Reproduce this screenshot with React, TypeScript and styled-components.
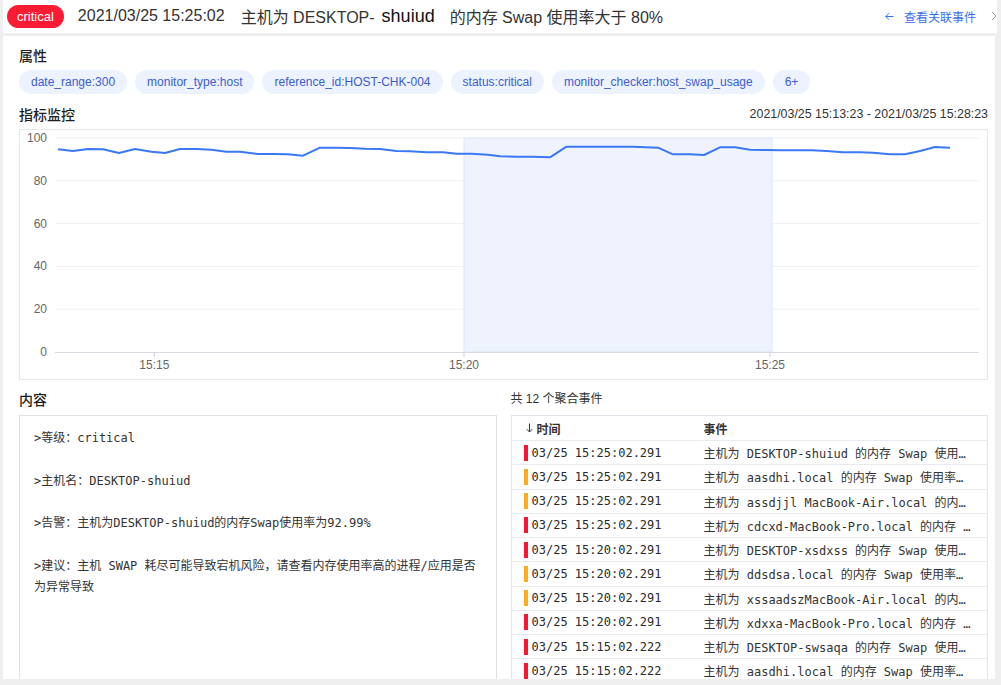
import React from "react";
import styled, { createGlobalStyle } from "styled-components";

const GlobalStyle = createGlobalStyle`
  html, body {
    margin: 0;
    padding: 0;
    background: #efefef;
    overflow: hidden;
  }
  body {
    font-family: "Liberation Sans", "Noto Sans CJK SC", sans-serif;
    color: #333;
  }
  * { box-sizing: border-box; }
`;

const Page = styled.div`
  width: 1001px;
  height: 685px;
  padding: 0 0 6px 3px;
  display: flex;
  flex-direction: column;
  gap: 3px;
  overflow: hidden;
`;

const Header = styled.header`
  height: 33px;
  margin-right: 4px;
  background: #fff;
  display: flex;
  align-items: center;
  padding: 0 0 1px 4px;
  overflow: hidden;
  flex-shrink: 0;
`;

const Badge = styled.span`
  height: 23px;
  line-height: 23px;
  padding: 0 10px;
  border-radius: 12px;
  background: #fb1b33;
  color: #fff;
  font-size: 13px;
  font-family: "Liberation Sans", sans-serif;
`;

const Title = styled.div`
  margin-left: 14px;
  display: flex;
  align-items: center;
  font-size: 16px;
  color: #333;
  white-space: nowrap;
  font-family: "Liberation Sans", "Noto Sans CJK SC", sans-serif;
`;

const Stamp = styled.span`
  margin-right: 16px;
`;

const Host = styled.span`
  font-size: 18px;
  color: #111;
  margin: 0 15px 0 7px;
`;

const LinkBtn = styled.a`
  margin-left: auto;
  display: flex;
  align-items: center;
  gap: 10px;
  color: #3a6cf0;
  font-size: 12px;
  font-family: "Noto Sans CJK SC", sans-serif;
  cursor: pointer;
`;

const Chevron = styled.svg`
  margin-left: 15px;
  flex-shrink: 0;
`;

const Body = styled.main`
  flex: 1;
  margin-right: 6px;
  background: #fff;
  padding: 9px 7px 0 16px;
  overflow: hidden;
  display: flex;
  flex-direction: column;
`;

const SectionTitle = styled.h3`
  margin: 0;
  font-size: 14px;
  line-height: 20px;
  font-weight: 500;
  color: #1f1f1f;
  font-family: "Noto Sans CJK SC", sans-serif;
`;

const Tags = styled.div`
  margin-top: 5px;
  display: flex;
  flex-wrap: wrap;
  gap: 8px;
`;

const Tag = styled.span`
  height: 24px;
  line-height: 24px;
  padding: 0 12px;
  border-radius: 12px;
  background: #edf3fe;
  color: #3b5bd3;
  font-size: 12px;
  font-family: "Liberation Sans", sans-serif;
`;

const SectionHead = styled.div`
  margin-top: 10px;
  display: flex;
  align-items: center;
  justify-content: space-between;
`;

const Range = styled.span`
  font-size: 12.4px;
  color: #333;
  font-family: "Liberation Sans", sans-serif;
`;

const ChartBox = styled.div`
  margin-top: 5px;
  height: 251px;
  border: 1px solid #e4e7ed;
  flex-shrink: 0;
`;

const Lower = styled.div`
  margin-top: 9px;
  display: grid;
  grid-template-columns: 1fr 1fr;
  gap: 14px;
`;

const Col = styled.section`
  display: flex;
  flex-direction: column;
  min-width: 0;
`;

const Count = styled.div`
  font-size: 12px;
  line-height: 20px;
  color: #333;
  font-family: "Liberation Sans", "Noto Sans CJK SC", sans-serif;
`;

const ContentBox = styled.div`
  margin-top: 6px;
  height: 320px;
  border: 1px solid #dfe1e6;
  padding: 12px 14px;
  font-size: 12px;
  line-height: 21.33px;
  color: #333;
  white-space: pre-wrap;
  font-family: "DejaVu Sans Mono", "Noto Sans CJK SC", monospace;
`;

const Table = styled.div`
  margin-top: 6px;
  border: 1px solid #e1e4ea;
  border-bottom: none;
`;

const HeadRow = styled.div`
  height: 25px;
  display: flex;
  align-items: center;
  border-bottom: 1px solid #e8eaef;
  font-size: 12px;
  font-weight: 600;
  color: #333;
  font-family: "Noto Sans CJK SC", sans-serif;
`;

const Row = styled.div`
  height: 24.25px;
  display: flex;
  align-items: center;
  border-bottom: 1px solid #e8eaef;
  font-size: 12px;
  color: #333;
  font-family: "DejaVu Sans Mono", "Noto Sans CJK SC", monospace;
`;

const TimeCell = styled.div`
  width: 192px;
  flex-shrink: 0;
  padding-left: 12px;
  display: flex;
  align-items: center;
  white-space: nowrap;
  color: #2a2a2a;
`;

const HeadTime = styled(TimeCell)`
  padding-left: 14px;
  gap: 4px;
  color: #333;
`;

const EventCell = styled.div`
  flex: 1;
  min-width: 0;
  padding-right: 15px;
  white-space: pre;
  overflow: hidden;
  text-overflow: ellipsis;
`;

const Bar = styled.span<{ $level: "critical" | "warning" }>`
  width: 4px;
  height: 16px;
  margin-right: 4px;
  background: ${(p) => (p.$level === "critical" ? "#fb1530" : "#ffab1c")};
`;

const tags = [
  "date_range:300",
  "monitor_type:host",
  "reference_id:HOST-CHK-004",
  "status:critical",
  "monitor_checker:host_swap_usage",
  "6+",
];

const points: [number, number][] = [
  [58, 149.3], [73, 151], [88, 149], [103, 149.3], [119, 153], [135, 149],
  [151.5, 151.7], [165, 153], [180, 149], [196.5, 149], [211.5, 149.7],
  [226.5, 151.7], [240, 151.7], [258, 154], [273, 154], [288, 154.3],
  [303, 155.7], [320, 147.7], [335, 147.7], [350, 148], [365, 148.7],
  [380, 149], [396.5, 151], [410, 151.3], [426.5, 152.3], [443, 152.3],
  [456.5, 153.7], [471.5, 153.7], [488, 154.7], [500, 156.2], [516.5, 156.7],
  [533, 156.7], [550, 157.3], [566.5, 146.7], [583, 146.7], [600, 146.7],
  [616.5, 146.7], [633, 146.7], [658, 147.7], [673, 154.3], [690, 154.3],
  [704, 155], [720, 147.3], [735, 147.3], [750, 149.7], [766.5, 150],
  [780, 150.3], [796, 150.3], [811.5, 150.3], [826.5, 151], [843, 152.3],
  [860, 152.3], [873, 152.7], [890, 154.3], [905, 154.3], [920, 151],
  [935, 147], [950, 147.7],
];

const yTicks = [100, 80, 60, 40, 20, 0];
const yOf = (v: number) => 352 - v * 2.14;
const xTicks: [number, string][] = [
  [154.3, "15:15"],
  [464, "15:20"],
  [770, "15:25"],
];

type Ev = { level: "critical" | "warning"; time: string; text: string };
const events: Ev[] = [
  { level: "critical", time: "03/25 15:25:02.291", text: "主机为 DESKTOP-shuiud 的内存 Swap 使用率大于 80%" },
  { level: "warning", time: "03/25 15:25:02.291", text: "主机为 aasdhi.local 的内存 Swap 使用率大于 80%" },
  { level: "warning", time: "03/25 15:25:02.291", text: "主机为 assdjjl MacBook-Air.local 的内存 Swap 使用率大于 80%" },
  { level: "critical", time: "03/25 15:25:02.291", text: "主机为 cdcxd-MacBook-Pro.local 的内存 Swap 使用率大于 80%" },
  { level: "critical", time: "03/25 15:20:02.291", text: "主机为 DESKTOP-xsdxss 的内存 Swap 使用率大于 80%" },
  { level: "warning", time: "03/25 15:20:02.291", text: "主机为 ddsdsa.local 的内存 Swap 使用率大于 80%" },
  { level: "warning", time: "03/25 15:20:02.291", text: "主机为 xssaadszMacBook-Air.local 的内存 Swap 使用率大于 80%" },
  { level: "critical", time: "03/25 15:20:02.291", text: "主机为 xdxxa-MacBook-Pro.local 的内存 Swap 使用率大于 80%" },
  { level: "critical", time: "03/25 15:15:02.222", text: "主机为 DESKTOP-swsaqa 的内存 Swap 使用率大于 80%" },
  { level: "critical", time: "03/25 15:15:02.222", text: "主机为 aasdhi.local 的内存 Swap 使用率大于 80%" },
];

const content =
  ">等级：critical\n\n>主机名：DESKTOP-shuiud\n\n>告警：主机为DESKTOP-shuiud的内存Swap使用率为92.99%\n\n>建议：主机 SWAP 耗尽可能导致宕机风险，请查看内存使用率高的进程/应用是否为异常导致";

function Chart() {
  const d = points.map(([x, y], i) => `${i ? "L" : "M"}${x} ${y}`).join(" ");
  return (
    <svg width="967" height="249" viewBox="20 130 967 249" style={{ display: "block" }}>
      {yTicks.map((v) => (
        <g key={v}>
          {v !== 0 && (
            <line x1={55} x2={979} y1={yOf(v)} y2={yOf(v)} stroke="#eef0f3" strokeWidth={1} />
          )}
          <text
            x={47}
            y={yOf(v) + 4}
            textAnchor="end"
            fontSize="12"
            fill="#666"
            fontFamily="Liberation Sans, sans-serif"
          >
            {v}
          </text>
        </g>
      ))}
      <rect x={464} y={138} width={308} height={214} fill="#eef3fe" stroke="#dbe5fb" strokeWidth={1} />
      <line x1={55} x2={979} y1={352.5} y2={352.5} stroke="#d9dce2" strokeWidth={1} />
      {xTicks.map(([x, label]) => (
        <g key={label}>
          <line x1={x} x2={x} y1={352} y2={357} stroke="#d0d3d9" strokeWidth={1} />
          <text
            x={x}
            y={369}
            textAnchor="middle"
            fontSize="12"
            fill="#666"
            fontFamily="Liberation Sans, sans-serif"
          >
            {label}
          </text>
        </g>
      ))}
      <path d={d} fill="none" stroke="#3b78f5" strokeWidth={2} strokeLinejoin="round" />
    </svg>
  );
}

export default function App() {
  return (
    <>
      <GlobalStyle />
      <Page>
        <Header>
          <Badge>critical</Badge>
          <Title>
            <Stamp>2021/03/25 15:25:02</Stamp>
            <span>主机为 DESKTOP-</span>
            <Host>shuiud</Host>
            <span>的内存 Swap 使用率大于 80%</span>
          </Title>
          <LinkBtn>
            <svg width="9" height="9" viewBox="0 0 9 9">
              <path d="M8.5 4.5H0.8M4 1.2L0.8 4.5 4 7.8" fill="none" stroke="#3a6cf0" strokeWidth="1" />
            </svg>
            查看关联事件
          </LinkBtn>
          <Chevron width="6" height="10" viewBox="0 0 6 10">
            <path d="M1 1l4 4-4 4" fill="none" stroke="#999" strokeWidth="1" />
          </Chevron>
        </Header>
        <Body>
          <SectionTitle>属性</SectionTitle>
          <Tags>
            {tags.map((t) => (
              <Tag key={t}>{t}</Tag>
            ))}
          </Tags>
          <SectionHead>
            <SectionTitle>指标监控</SectionTitle>
            <Range>2021/03/25 15:13:23 - 2021/03/25 15:28:23</Range>
          </SectionHead>
          <ChartBox>
            <Chart />
          </ChartBox>
          <Lower>
            <Col>
              <SectionTitle>内容</SectionTitle>
              <ContentBox>{content}</ContentBox>
            </Col>
            <Col>
              <Count>共 12 个聚合事件</Count>
              <Table>
                <HeadRow>
                  <HeadTime>
                    <svg width="7" height="10" viewBox="0 0 7 10">
                      <path d="M3.5 0.5V9M0.8 6.2L3.5 9 6.2 6.2" fill="none" stroke="#333" strokeWidth="1" />
                    </svg>
                    时间
                  </HeadTime>
                  <EventCell>事件</EventCell>
                </HeadRow>
                {events.map((e, i) => (
                  <Row key={i}>
                    <TimeCell>
                      <Bar $level={e.level} />
                      {e.time}
                    </TimeCell>
                    <EventCell>{e.text}</EventCell>
                  </Row>
                ))}
              </Table>
            </Col>
          </Lower>
        </Body>
      </Page>
    </>
  );
}
